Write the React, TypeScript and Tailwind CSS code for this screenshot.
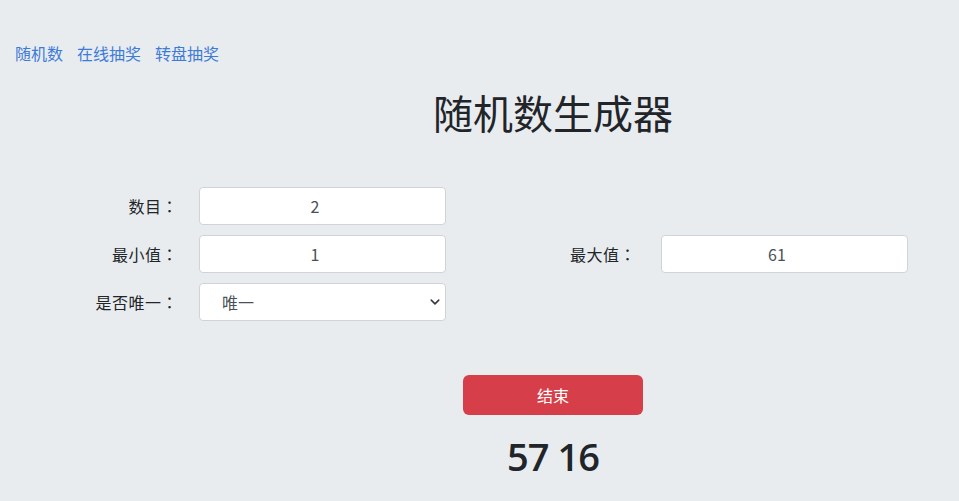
const cjk = { fontFamily: '"Noto Sans CJK SC", "Open Sans", sans-serif' };
const colon = { fontFamily: '"Noto Sans CJK TC", sans-serif' };

function Label(props: { text: string; width: string }) {
  return (
    <div className={`${props.width} text-right text-[16px] tracking-[0.5px] text-[#212529]`}>
      {props.text}
      <span style={colon}>：</span>
    </div>
  );
}

function NumberBox(props: { value: string; gap: string }) {
  return (
    <input
      readOnly
      value={props.value}
      className={`${props.gap} h-[38px] w-[247px] rounded-[4px] border border-[#ced4da] bg-white pr-[15px] text-center text-[16px] text-[#495057] outline-none`}
      style={cjk}
    />
  );
}

export default function App() {
  return (
    <div className="min-h-[501px] w-full bg-[#e9ecef]" style={cjk}>
      <nav className="flex gap-[14px] px-[15px] pt-[41px] text-[16px] leading-6 text-[#3d7bd9]">
        <a href="#">随机数</a>
        <a href="#">在线抽奖</a>
        <a href="#">转盘抽奖</a>
      </nav>

      <div className="pl-[147px] pt-[23px] text-center">
        <h1 className="text-[40px] leading-[48px] font-normal text-[#212529]">随机数生成器</h1>
      </div>

      <div className="mt-[51px] flex flex-col gap-[10px]">
        <div className="flex items-center">
          <Label text="数目" width="w-[178px]" />
          <NumberBox value="2" gap="ml-[21px]" />
        </div>
        <div className="flex items-center">
          <Label text="最小值" width="w-[178px]" />
          <NumberBox value="1" gap="ml-[21px]" />
          <Label text="最大值" width="w-[190px]" />
          <NumberBox value="61" gap="ml-[25px]" />
        </div>
        <div className="flex items-center">
          <Label text="是否唯一" width="w-[178px]" />
          <div className="relative ml-[21px] h-[38px] w-[247px]">
            <select
              className="h-full w-full appearance-none rounded-[4px] border border-[#ced4da] bg-white pl-[22px] text-[16px] text-[#495057] outline-none"
              style={cjk}
              defaultValue="1"
            >
              <option value="1">唯一</option>
              <option value="0">不唯一</option>
            </select>
            <svg
              className="pointer-events-none absolute right-[6px] top-[14px]"
              width="10"
              height="10"
              viewBox="0 0 16 16"
              fill="none"
              stroke="#343a40"
              strokeWidth="2.5"
              strokeLinecap="round"
              strokeLinejoin="round"
            >
              <path d="M2 5l6 6 6-6" />
            </svg>
          </div>
        </div>
      </div>

      <div className="flex flex-col items-center pl-[147px] pt-[54px]">
        <button
          type="button"
          className="h-[40px] w-[180px] rounded-[6px] bg-[#d63f4a] text-[16px] text-white"
          style={cjk}
        >
          结束
        </button>
        <div
          className="mt-[18px] text-[38px] leading-[46px] font-semibold tracking-[-1px] text-[#212529]"
          style={{ fontFamily: '"Open Sans", sans-serif' }}
        >
          57 16
        </div>
      </div>
    </div>
  );
}
